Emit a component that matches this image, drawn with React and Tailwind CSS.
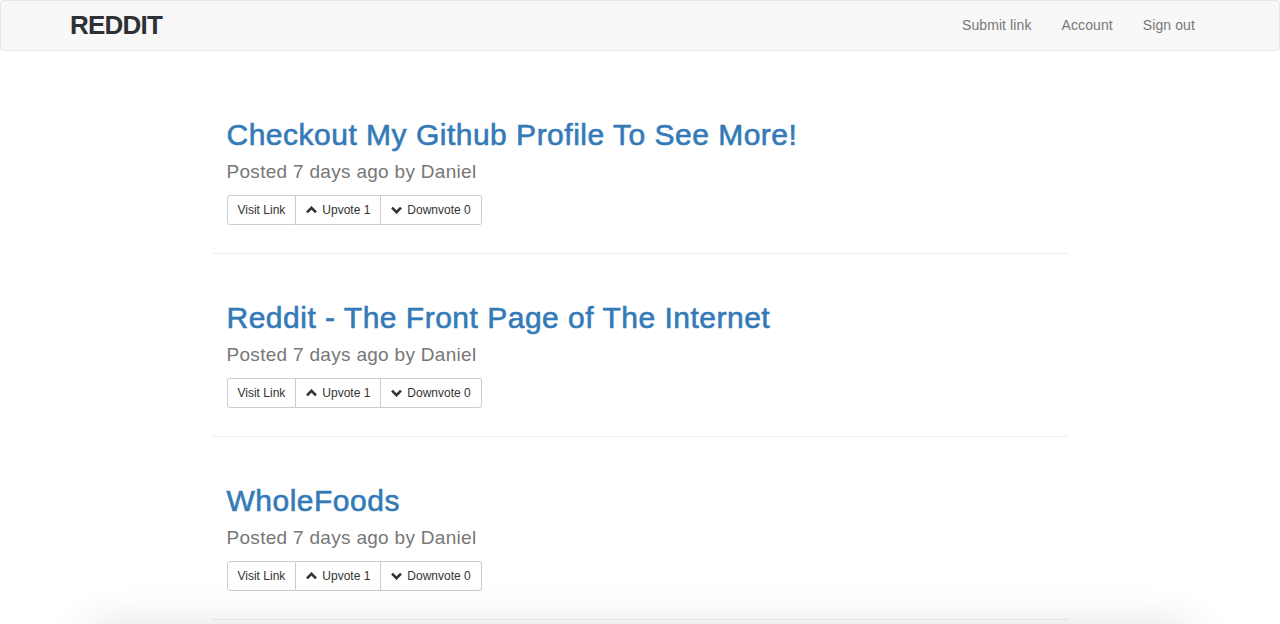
const posts = [
  { title: "Checkout My Github Profile To See More!", upvotes: 1, downvotes: 0 },
  { title: "Reddit - The Front Page of The Internet", upvotes: 1, downvotes: 0 },
  { title: "WholeFoods", upvotes: 1, downvotes: 0 },
];

const ChevronUp = () => (
  <svg width="11" height="8" viewBox="0 0 11 8" className="mr-[5px]">
    <path d="M1 6.3 L5.5 1.8 L10 6.3" fill="none" stroke="#333" strokeWidth="2.6" />
  </svg>
);

const ChevronDown = () => (
  <svg width="11" height="8" viewBox="0 0 11 8" className="mr-[5px]">
    <path d="M1 1.7 L5.5 6.2 L10 1.7" fill="none" stroke="#333" strokeWidth="2.6" />
  </svg>
);

const Post = ({ post }) => (
  <div className="pt-[47px]">
    <div className="px-[14px]">
      <h2 className="text-[30px] leading-[33px] h-[33px] text-[#337ab7] tracking-[0.5px] [-webkit-text-stroke:0.6px_#337ab7] whitespace-nowrap">
        {post.title}
      </h2>
      <h4 className="mt-[11px] text-[19px] leading-[20px] h-[20px] text-[#777] tracking-[0.3px]">
        Posted 7 days ago by Daniel
      </h4>
      <div className="mt-[13px] flex h-[30px] text-[12px] text-[#333]">
        <button className="h-[30px] px-[10px] border border-[#ccc] rounded-l-[3px] bg-white flex items-center">
          Visit Link
        </button>
        <button className="h-[30px] px-[10px] border border-l-0 border-[#ccc] bg-white flex items-center">
          <ChevronUp />
          Upvote {post.upvotes}
        </button>
        <button className="h-[30px] px-[10px] border border-l-0 border-[#ccc] rounded-r-[3px] bg-white flex items-center">
          <ChevronDown />
          Downvote {post.downvotes}
        </button>
      </div>
    </div>
    <hr className="mt-[28px] border-t border-[#eee]" />
  </div>
);

export default function App() {
  return (
    <div className="min-h-[624px] bg-white font-['Liberation_Sans',Arial,sans-serif] overflow-hidden">
      <nav className="h-[51px] bg-[#f8f8f8] border border-[#e7e7e7] rounded-[4px] flex items-center justify-between pl-[69px] pr-[69px]">
        <span className="text-[26px] font-bold text-[#2d3135] tracking-[-0.8px]">REDDIT</span>
        <div className="flex text-[14px] text-[#777] tracking-[0.1px]">
          <a className="px-[15px]">Submit link</a>
          <a className="px-[15px]">Account</a>
          <a className="px-[15px]">Sign out</a>
        </div>
      </nav>
      <main className="w-[855px] mx-auto pt-[20px]">
        {posts.map((p, i) => (
          <Post key={i} post={p} />
        ))}
      </main>
      <div className="fixed top-[628px] left-[90px] right-[90px] h-[60px] bg-white shadow-[0_0_45px_rgba(0,0,0,0.14)]" />
    </div>
  );
}
